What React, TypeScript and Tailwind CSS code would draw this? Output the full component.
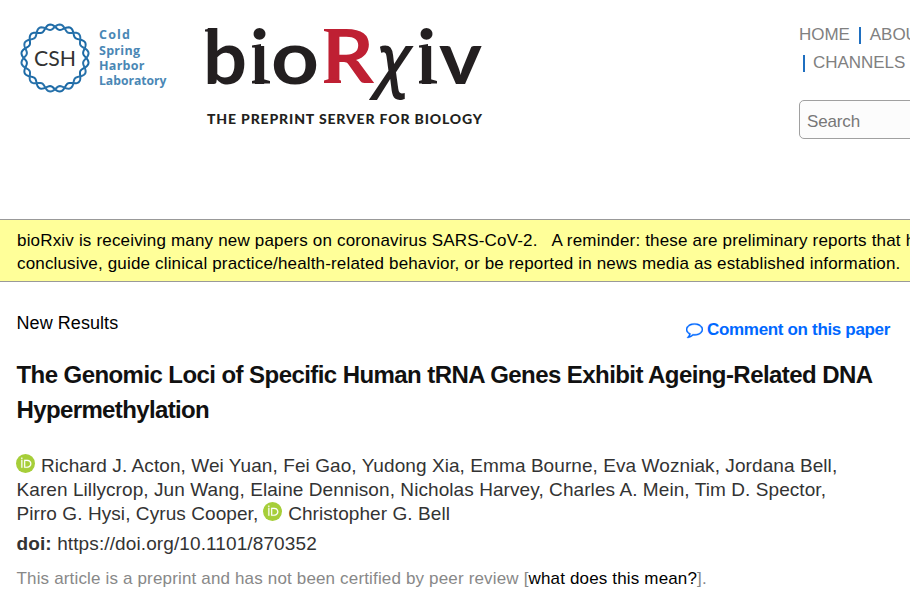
import React from "react";

const LATO = "Lato, 'Open Sans', sans-serif";

function strand(phase: number): string {
  const pts: string[] = [];
  for (let i = 0; i <= 360; i += 2) {
    const t = (i * Math.PI) / 180;
    const r = 31.2 + 2.7 * Math.sin(10 * t + phase);
    pts.push(`${(35 + r * Math.cos(t)).toFixed(2)},${(35 + r * Math.sin(t)).toFixed(2)}`);
  }
  return pts.join(" ");
}

function CshLogo() {
  return (
    <div className="flex items-start">
      <svg width="70" height="70" viewBox="0 0 70 70" className="block shrink-0">
        <polyline points={strand(0)} fill="none" stroke="#1c6aa6" strokeWidth="2" />
        <polyline points={strand(Math.PI)} fill="none" stroke="#2872ab" strokeWidth="2" />
        <text x="14" y="42.7" fontSize="22" fontFamily={LATO} fill="#333" textLength="42" lengthAdjust="spacingAndGlyphs">CSH</text>
      </svg>
      <svg width="74" height="68" viewBox="0 0 74 68" className="ml-[7px] block shrink-0" fontFamily="'Open Sans', sans-serif" fontSize="12.5" fontWeight="700" fill="#4a87b5">
        <text x="2" y="16" textLength="31">Cold</text>
        <text x="2" y="31.5" textLength="41">Spring</text>
        <text x="2" y="46.7" textLength="45.5">Harbor</text>
        <text x="2" y="62" textLength="67.5" lengthAdjust="spacingAndGlyphs">Laboratory</text>
      </svg>
    </div>
  );
}

function BiorxivLogo() {
  return (
    <svg width="290" height="110" viewBox="200 20 290 110" className="block shrink-0" fill="#231f20" fontFamily={LATO}>
      <g fontSize="75" fontWeight="700">
        <text x="203" y="83.5" textLength="44" lengthAdjust="spacingAndGlyphs">b</text>
        <text x="250" y="83.5">i</text>
        <text x="271" y="83.5" textLength="48" lengthAdjust="spacingAndGlyphs">o</text>
        <text x="417" y="83.5">i</text>
        <text x="439" y="83.5" textLength="43" lengthAdjust="spacingAndGlyphs">v</text>
        <text x="322" y="83" fill="#bf2033" textLength="52" lengthAdjust="spacingAndGlyphs">R</text>
      </g>
      <path d="M205 29.5L214 28v4L205 31.5zM252 45.500l9-1.5v4l-9-.5zM252 83.500v-2.500l9-2.500 9 2.500v2.500zM419 45.500l9-1.500v4l-9-.5zM419 83.500v-2.500l9-2.500 9 2.500v2.500z" />
      <path d="M324 29h8v4l-8-2zM324 83v-2.500l8.500-2.500 8.500 2.500v2.500z" fill="#bf2033" />
      <text x="376.500" y="83" fontSize="69" fontWeight="600" fontStyle="italic" fontFamily="'Open Sans', sans-serif" textLength="34" lengthAdjust="spacingAndGlyphs">χ</text>
      <text x="207" y="123.500" fontSize="14" fontWeight="900" textLength="275">THE PREPRINT SERVER FOR BIOLOGY</text>
    </svg>
  );
}

function Orcid() {
  return (
    <svg width="19" height="19" viewBox="0 0 256 256" className="ml-[-0.5px] mr-[6px] inline-block align-[-1px]">
      <circle cx="128" cy="128" r="128" fill="#a6ce39" />
      <g fill="#fff" stroke="#fff" strokeWidth="2">
        <path d="M86.3 186.2H70.9V79.1h15.4v107.1z" />
        <path fillRule="evenodd" d="M108.9 79.1h41.6c39.6 0 57 28.3 57 53.6 0 27.5-21.5 53.6-56.8 53.6h-41.8V79.1zm15.4 93.3h24.5c34.9 0 42.9-26.5 42.9-39.7C191.7 111.2 178 93 148 93h-23.7v79.4z" />
        <circle cx="78.6" cy="56.8" r="10.1" />
      </g>
    </svg>
  );
}

function CommentIcon() {
  return (
    <svg width="17" height="17" viewBox="0 0 1792 1792" fill="#0068ff" className="mr-1 block">
      <path d="M896 384q-204 0-381.500 69.500t-282 187.500-104.500 255q0 112 71.500 213.500t201.500 175.500l87 50-27 96q-24 91-70 172 152-63 275-171l43-38 57 6q69 8 130 8 204 0 381.500-69.500t282-187.500 104.500-255-104.500-255-282-187.500-381.500-69.500zm896 512q0 174-120 321.500t-326 233-450 85.500q-70 0-145-8-198 175-460 242-49 14-114 22h-5q-15 0-27-10.500t-16-27.500v-1q-3-4-.5-12t2-10 4.500-9.500l6-9 7-8.500 8-9q7-8 31-34.500t34.500-38 31-39.500 32.500-51 27-59 26-76q-157-89-247.500-220t-90.500-281q0-130 71-248.500t191-204.500 286-136.500 348-50.500 348 50.500 286 136.500 191 204.500 71 248.500z" stroke="#0068ff" strokeWidth="40" transform="translate(0 -110)" />
    </svg>
  );
}

export default function App() {
  return (
    <div className="h-[596px] w-[910px] overflow-hidden bg-white font-['Liberation_Sans',Arial,sans-serif] text-black">
      <header className="flex h-[219px] items-start overflow-hidden">
        <div className="ml-[20px] mt-[23px] w-[151px] shrink-0"><CshLogo /></div>
        <div className="ml-[29px] mt-[20px] shrink-0"><BiorxivLogo /></div>
        <div className="ml-[309px] mt-[21px] shrink-0 text-[17px]">
          <nav className="w-[200px] whitespace-nowrap leading-[28px] tracking-[-0.05px] text-[#808080]">
            <div className="flex items-center">
              <span>HOME</span>
              <span className="ml-[9px] mr-[9px] h-[17px] w-[2px] bg-[#1f6fc0]" />
              <span>ABOUT</span>
            </div>
            <div className="flex items-center">
              <span className="ml-[4px] mr-[8px] h-[17px] w-[2px] bg-[#1f6fc0]" />
              <span>CHANNELS</span>
            </div>
          </nav>
          <div className="mt-[23px] flex h-[39px] w-[200px] items-center rounded-[5px] border border-[#a0a0a0] bg-[#fcfcfc] pl-[7px] pt-[4px] tracking-[-0.15px] text-[#777]">Search</div>
        </div>
      </header>
      <div className="h-[63px] overflow-hidden whitespace-nowrap border-y border-[#999] bg-[#ffff99] pl-[17px] pt-[9px] text-[17px] leading-[23px] tracking-[0.161px]">
        <p className="tracking-[0.18px]">bioRxiv is receiving many new papers on coronavirus SARS-CoV-2.&nbsp;&nbsp; A reminder: these are preliminary reports that have not been</p>
        <p>conclusive, guide clinical practice/health-related behavior, or be reported in news media as established information.</p>
      </div>
      <main className="pl-[16.5px] pr-5">
        <div className="flex h-[75px] items-start justify-between">
          <span className="pt-[30px] text-[18px] leading-[22px] tracking-[0.06px]">New Results</span>
          <a className="flex items-center pt-[37px] text-[17px] font-bold leading-[22px] tracking-[-0.33px] text-[#0068ff]"><CommentIcon />Comment on this paper</a>
        </div>
        <h1 className="whitespace-nowrap text-[24px] font-bold leading-[35px] tracking-[-0.57px] text-[#111]">
          The Genomic Loci of Specific Human tRNA Genes Exhibit Ageing-Related DNA<br /><span className="tracking-[-0.63px]">Hypermethylation</span>
        </h1>
        <div className="mt-[27px] whitespace-nowrap text-[19px] leading-[24px] tracking-[0.075px] text-[#333]">
          <p><Orcid />Richard J. Acton, Wei Yuan, Fei Gao, Yudong Xia, Emma Bourne, Eva Wozniak, Jordana Bell,</p>
          <p>Karen Lillycrop, Jun Wang, Elaine Dennison, Nicholas Harvey, Charles A. Mein, Tim D. Spector,</p>
          <p>Pirro G. Hysi, Cyrus Cooper, <Orcid />Christopher G. Bell</p>
          <p className="mt-[6px] tracking-[0.11px]"><b>doi:</b> https://doi.org/10.1101/870352</p>
        </div>
        <p className="mt-[11px] whitespace-nowrap text-[17px] leading-[24px] tracking-[0.16px] text-[#888]">
          This article is a preprint and has not been certified by peer review [<span className="text-black">what does this mean?</span>].
        </p>
      </main>
    </div>
  );
}
